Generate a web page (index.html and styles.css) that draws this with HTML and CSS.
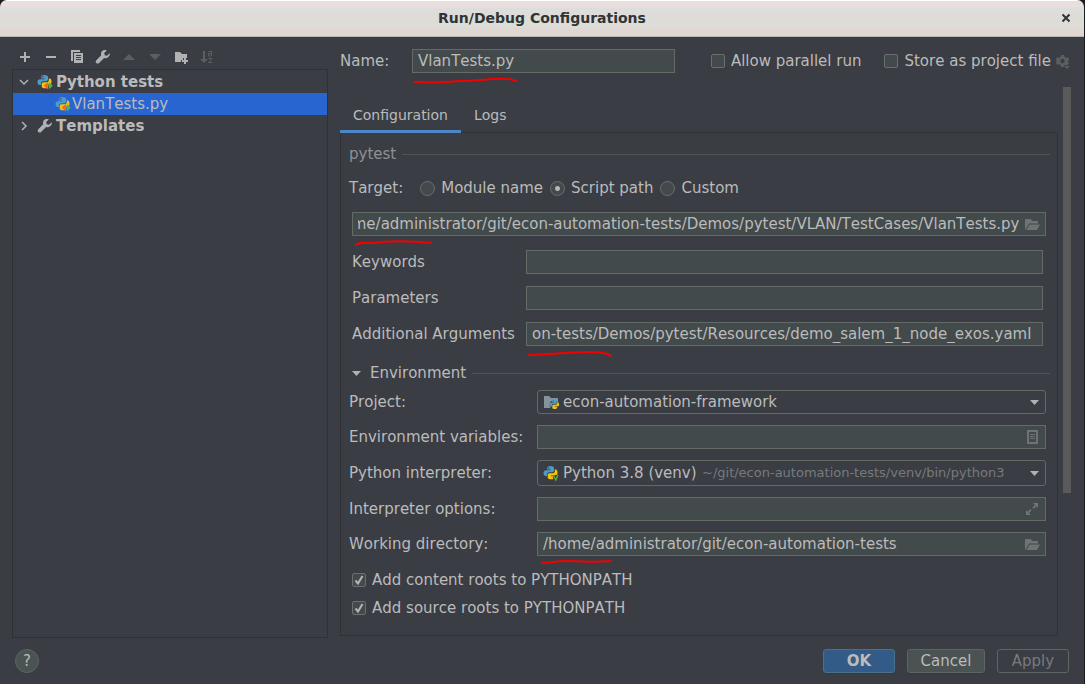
FILE: index.html
```html
<!DOCTYPE html>
<html lang="en">
<head>
<meta charset="utf-8">
<title>Run/Debug Configurations</title>
<link rel="stylesheet" href="styles.css">
</head>
<body>
<svg class="defs" width="0" height="0" aria-hidden="true">
  <defs>
    <g id="python">
      <path fill="#4a9cc9" d="M7 1C4.700 1 4.200 2 4.200 3v1.500h3.300v.7H3C1.500 5.200.5 6.200.5 8s1 3 2.200 3H4V9.300C4 8 5 7.200 6.200 7.200h3c1 0 1.800-.8 1.800-1.900V3c0-1.300-1.200-2-4-2z"/>
      <path fill="#f5c20b" d="M11.800 4.500v1.700c0 1.200-1 2-2.200 2H6.400c-1.100 0-1.700.9-1.700 1.800v2.500c0 1.200 1.300 1.800 3.300 1.800 2.200 0 3.300-.8 3.300-1.900v-1.200H8v-.7h4.500c1.300 0 2-1 2-2.800 0-2-.7-3.200-1.900-3.200z"/>
      <circle cx="5.800" cy="2.800" r=".7" fill="#3a3d44"/>
    </g>
    <g id="pytest">
      <use href="#python"/>
      <path fill="#f26522" d="M10.800 8v7.500L6.800 11.800z"/>
      <path fill="#4fb84d" d="M11.800 8v7.500l4-3.700z"/>
    </g>
    <path id="wrench" d="M14.700 4.200l-2.700 2.600-2.300-.5-.5-2.300 2.600-2.600C10 .6 8 1 6.900 2.300c-1 1.100-1.200 2.600-.7 3.900L1.300 11.200c-.8.8-.8 2 0 2.800.8.800 2 .8 2.800 0l5-5c1.300.5 2.800.2 3.900-.7 1.300-1.100 2.300-2.600 1.700-4.100z"/>
    <path id="open-folder" d="M0 12V1h5.500l2 2H13v2.500H4L1 11zM4.600 6.500H15L12 12H1.500z"/>
    <path id="down" d="M0 0h9L4.500 5z"/>
  </defs>
</svg>
<div class="dialog">
  <header class="titlebar">
    <h1>Run/Debug Configurations</h1>
    <button class="close" aria-label="Close"><svg width="10" height="10" viewBox="0 0 10 10"><path d="M1.500 1.500l7 7M8.500 1.500l-7 7"/></svg></button>
  </header>
  <main class="content">
    <aside class="sidebar">
      <div class="toolbar">
        <button aria-label="Add"><svg width="16" height="16" viewBox="0 0 16 16"><path d="M7 3h2v4h4v2H9v4H7V9H3V7h4z"/></svg></button>
        <button aria-label="Remove"><svg width="16" height="16" viewBox="0 0 16 16"><path d="M3 7h10v2H3z"/></svg></button>
        <button aria-label="Copy"><svg width="16" height="16" viewBox="0 0 16 16"><path d="M2 1h9v2H4v9H2z"/><path fill-rule="evenodd" d="M5 4h9v10H5zM7 6v1h5V6zm0 2v1h5V8zm0 2v1h5v-1z"/></svg></button>
        <button aria-label="Edit templates"><svg width="16" height="16" viewBox="0 0 16 16"><use href="#wrench"/></svg></button>
        <button aria-label="Move up" disabled><svg width="16" height="16" viewBox="0 0 16 16"><path d="M2 11h12L8 5z"/></svg></button>
        <button aria-label="Move down" disabled><svg width="16" height="16" viewBox="0 0 16 16"><path d="M2 5h12l-6 6z"/></svg></button>
        <button aria-label="Create folder"><svg width="16" height="16" viewBox="0 0 16 16"><path d="M2 3h5l2 2h5v4h-4v2H8v2H2z"/><path d="M11 9h2v2h2v2h-2v2h-2v-2H9v-2h2z"/></svg></button>
        <button aria-label="Sort" disabled><svg width="16" height="16" viewBox="0 0 16 16"><path d="M4 2h2v8h3l-4 4-4-4h3z"/><path class="line" d="M9.500 2.500h3V7h-3V4.500h3M9.500 9.500h3.500l-3.500 4H13.500"/></svg></button>
      </div>
      <ul class="tree">
        <li><svg class="chevron" width="16" height="16" viewBox="0 0 16 16"><path d="M4 6l4 4 4-4"/></svg><svg width="16" height="16" viewBox="0 0 16 16"><use href="#pytest"/></svg><b>Python tests</b></li>
        <li class="child selected"><svg width="16" height="16" viewBox="0 0 16 16"><use href="#pytest"/></svg><span>VlanTests.py</span></li>
        <li><svg class="chevron" width="16" height="16" viewBox="0 0 16 16"><path d="M6 4l4 4-4 4"/></svg><svg width="16" height="16" viewBox="0 0 16 16"><use href="#wrench"/></svg><b>Templates</b></li>
      </ul>
    </aside>
    <section class="editor">
      <div class="name-row">
        <label for="name">Name:</label>
        <div class="field"><input id="name" type="text" value="VlanTests.py">
          <svg class="mark" width="110" height="10" viewBox="0 0 110 10"><path d="M2 8q26 1 44-1c20 0 34-3 47-2 6 0 6 1 10 2"/></svg></div>
        <div class="options">
          <label class="check"><input type="checkbox">Allow parallel run</label>
          <div class="store"><label class="check"><input type="checkbox">Store as project file</label>
          <button class="gear" aria-label="Storage options" disabled><svg width="16" height="16" viewBox="0 0 16 16"><path fill-rule="evenodd" d="M6 2h3l.5 2 1.500.8 2-.6 1.300 2.500L12.800 8v1l1.200 1-1 2H9.500L9 14H6l-.5-2-1.500-.8-2 .6L.700 9.300 2.200 8 .7 6.700 2 4.200l2 .6L5.500 4zM7.500 5.800a2.200 2.200 0 100 4.400 2.200 2.200 0 000-4.400z"/><path d="M9 13h6l-3 3z"/></svg></button></div>
        </div>
      </div>
      <div class="scroll">
        <div class="pane">
          <nav class="tabs"><button class="active">Configuration</button><button>Logs</button></nav>
          <form class="panel">
            <h2 class="heading muted">pytest</h2>
            <div class="target"><span>Target:</span>
              <label class="check"><input type="radio" name="target">Module name</label>
              <label class="check"><input type="radio" name="target" checked>Script path</label>
              <label class="check"><input type="radio" name="target">Custom</label>
            </div>
            <div class="group">
              <div class="field path"><input class="tail" type="text" aria-label="Script path" value="/home/administrator/git/econ-automation-tests/Demos/pytest/VLAN/TestCases/VlanTests.py"><svg width="15" height="13" viewBox="0 0 15 13"><use href="#open-folder"/></svg>
                <svg class="mark" width="84" height="10" viewBox="0 0 84 10"><path d="M3 8c3-3 6-2 16-2 15-2 32-3 59 0"/></svg></div>
              <div class="args">
                <label for="keywords">Keywords</label><div class="field"><input id="keywords" type="text"></div>
                <label for="parameters">Parameters</label><div class="field"><input id="parameters" type="text"></div>
                <label for="additional">Additional Arguments</label><div class="field"><input class="tail" id="additional" type="text" value="on-tests/Demos/pytest/Resources/demo_salem_1_node_exos.yaml">
                  <svg class="mark" width="90" height="10" viewBox="0 0 90 10"><path d="M2 8c22 0 35-3 60-3 13 0 18 1 22 4"/></svg></div>
              </div>
            </div>
            <h2 class="heading environment"><svg width="9" height="5" viewBox="0 0 9 5"><use href="#down"/></svg>Environment</h2>
            <div class="env">
              <label for="project">Project:</label>
              <div class="combo"><svg width="16" height="16" viewBox="0 0 16 16"><path fill="#87939a" d="M1 2h5l2 2h7v10H1z"/><circle cx="11" cy="11" r="4.500" fill="#3a3d44"/><use href="#python" transform="translate(6 5) scale(.7)"/></svg><select id="project"><option>econ-automation-framework</option></select><svg class="arrow" width="9" height="5" viewBox="0 0 9 5"><use href="#down"/></svg></div>
              <label for="variables">Environment variables:</label>
              <div class="field"><input id="variables" type="text"><svg width="15" height="15" viewBox="0 0 15 15"><path fill-rule="evenodd" d="M2 0h11v14H2zM4 2v10h7V2z"/><path d="M5 4h5v1H5zm0 2h5v1H5zm0 2h5v1H5z"/></svg></div>
              <label for="interpreter">Python interpreter:</label>
              <div class="combo tall"><svg width="16" height="16" viewBox="0 0 16 16"><use href="#python"/><path fill="#3a3d44" d="M10 10h6v6h-6z"/><path fill="none" stroke="#59a93f" stroke-width="1.500" d="M10.500 10l2.200 5L15 10"/></svg><select id="interpreter"><option>Python 3.8 (venv)</option></select><span class="hint">~/git/econ-automation-tests/venv/bin/python3</span><svg class="arrow" width="9" height="5" viewBox="0 0 9 5"><use href="#down"/></svg></div>
              <label for="interpreter-options">Interpreter options:</label>
              <div class="field"><input id="interpreter-options" type="text"><svg width="15" height="15" viewBox="0 0 15 15"><path d="M8 1h5v5l-1.700-1.700-2.600 2.600-1.300-1.300L10 3zM1 8l1.700 1.700 2.600-2.600 1.300 1.300L4 11l2 2H1z"/></svg></div>
              <label for="directory">Working directory:</label>
              <div class="field"><input id="directory" type="text" value="/home/administrator/git/econ-automation-tests"><svg width="15" height="13" viewBox="0 0 15 13"><use href="#open-folder"/></svg>
                <svg class="mark" width="80" height="10" viewBox="0 0 80 10"><path d="M4 6c8 0 12-2 26-2s26 2 43 0"/></svg></div>
            </div>
            <div class="roots">
              <label class="check"><input type="checkbox" checked><svg class="tick" width="14" height="14" viewBox="0 0 14 14"><path d="M3.500 7.500l2.500 3 4.500-7.500"/></svg>Add content roots to PYTHONPATH</label>
              <label class="check"><input type="checkbox" checked><svg class="tick" width="14" height="14" viewBox="0 0 14 14"><path d="M3.500 7.500l2.500 3 4.500-7.500"/></svg>Add source roots to PYTHONPATH</label>
            </div>
          </form>
        </div>
        <div class="scrollbar"><div class="thumb"></div></div>
      </div>
    </section>
  </main>
  <footer class="footer">
    <button class="help" aria-label="Help">?</button>
    <button class="button primary">OK</button>
    <button class="button cancel">Cancel</button>
    <button class="button" disabled>Apply</button>
  </footer>
</div>
<script src="script.js"></script>
</body>
</html>
```
FILE: styles.css
```css
* { box-sizing: border-box; }
body { margin: 0; background: #1c1d20; color: #bbb; font: 15px/20px "DejaVu Sans", sans-serif; font-kerning: none; }
button, input, select { margin: 0; padding: 0; border: 0; background: none; color: inherit; font: inherit; font-kerning: none; }
svg { flex: none; fill: #afb1b3; }
.defs { position: absolute; }
.dialog { display: flex; flex-direction: column; min-height: 100vh; margin-right: 1px; border-radius: 7px 7px 0 0; background: #3a3d44; overflow: hidden; }
.titlebar { position: relative; display: flex; align-items: center; justify-content: center; height: 37px; border-bottom: 1px solid #bbb7b0; background: linear-gradient(#fff 0 1px, #e9dfdd 1px 7px, #dddddd 8px 12px, #dedcd6 14px 28px, #e0d6d3 29px); }
.titlebar h1 { margin: 0; color: #2e3436; font-size: 14px; line-height: 20px; }
.close { position: absolute; right: 13px; top: 8px; }
.close svg { fill: none; stroke: #2e3436; stroke-width: 2; }

.content { display: grid; grid-template-columns: 316px minmax(0, 1fr); gap: 12px; flex: 1; padding: 12px 13px 0 12px; }
.sidebar { display: flex; flex-direction: column; }
.toolbar { display: flex; gap: 10px; height: 20px; padding: 0 5px 4px; }
.toolbar svg { display: block; }
:disabled svg { fill: #5c5e60; }
.toolbar .line { fill: none; stroke: #5c5e60; }
.tree { flex: 1; margin: 0; padding: 1px 0 0; border: 1px solid #303133; list-style: none; }
.tree li { display: flex; align-items: center; height: 22px; padding-left: 3px; }
.tree li.child { padding-left: 42px; }
.tree li.child span { margin-left: 1px; }
.tree b { margin-left: 3px; }
.tree .chevron { margin-right: 5px; fill: none; stroke: #afb1b3; stroke-width: 1.5; }
.tree .selected { background: #2965d1; }

.editor { display: flex; flex-direction: column; }
.name-row { display: flex; align-items: center; height: 24px; }
.name-row > label { width: 72px; }
.name-row .field { flex: 1; }
.options { display: flex; gap: 23px; margin-left: 36px; }
.store { display: flex; align-items: center; gap: 4px; }
.gear svg { display: block; }
.field { position: relative; display: flex; align-items: center; height: 24px; padding: 0 5px; border: 1px solid #646a66; background: #434a4b; }
.field input { flex: 1; min-width: 0; height: 22px; outline: 0; }
.field > svg { margin-left: 6px; fill: #6e7375; }
.field .mark { position: absolute; left: 0; top: 24px; margin: 0; fill: none; stroke: #f50000; stroke-width: 2; stroke-linecap: round; }
.check { position: relative; display: flex; align-items: center; gap: 6px; white-space: nowrap; }
.check input { appearance: none; flex: none; width: 14px; height: 14px; border: 1px solid #6b6f6e; border-radius: 2px; background: #434a4b; }
.check input[type="radio"] { width: 15px; height: 15px; border-radius: 50%; }
.check input[type="radio"]:checked { background: radial-gradient(circle, #b4b6b6 0 2px, #434a4b 3px); }
.tick { position: absolute; left: 0; top: 3px; fill: none; stroke: #b4b6b6; stroke-width: 2; }

.scroll { display: flex; flex: 1; gap: 5px; margin: 13px 0 2px; }
.pane { display: flex; flex: 1; flex-direction: column; min-width: 0; }
.scrollbar { width: 8px; padding-top: 1px; }
.thumb { height: 74%; background: #5a5a5a; }
.tabs { position: relative; display: flex; }
.tabs button { padding: 14px 13px 0; border-bottom: 3px solid transparent; font-size: 14px; line-height: 30px; }
.tabs .active { border-color: #4a88c7; }
.panel { flex: 1; margin-top: -1px; padding: 11px 11px 16px 8px; border: 1px solid #303133; }
.heading { display: flex; align-items: center; gap: 6px; margin: 0 -4px 0 0; font-size: 15px; font-weight: 400; line-height: 20px; }
.heading::after { content: ""; flex: 1; height: 1px; background: #505456; }
.muted { color: #8f9192; }
.target { display: flex; gap: 7px; margin: 14px 0; }
.target span { margin-right: 10px; }
.group { padding-left: 3px; }
.args { display: grid; grid-template-columns: 174px minmax(0, 1fr); row-gap: 12px; align-items: center; margin-top: 14px; padding-right: 3px; }
.environment { margin-top: 17px; padding-left: 3px; }
.environment svg { margin-right: 3px; }
.env { display: grid; grid-template-columns: 188px minmax(0, 1fr); row-gap: 11px; align-items: center; margin-top: 7px; }
.combo { display: flex; align-items: center; height: 24px; padding: 0 6px 0 5px; border: 1px solid #646a66; border-radius: 3px; }
.combo.tall { height: 26px; }
.combo select { appearance: none; margin-left: 4px; outline: 0; }
.combo .arrow { margin-left: auto; }
.hint { margin-left: 5px; color: #777a7b; font-size: 13px; }
.roots { display: flex; flex-direction: column; align-items: start; gap: 8px; margin-top: 14px; padding-left: 3px; }

.footer { display: flex; align-items: center; gap: 12px; padding: 11px 15px; }
.help { width: 24px; height: 24px; margin-right: auto; border: 1px solid #5e6562; border-radius: 50%; background: #4a5252; line-height: 20px; }
.button { width: 72px; height: 24px; border: 1px solid #5e6562; border-radius: 3px; }
.button:disabled { color: #777a7b; }
.primary { border-color: #4a708a; background: #325b88; font-weight: 700; box-shadow: 0 1px #34373b; }
.cancel { width: 78px; background: #4a5252; box-shadow: 0 1px #34373b; }
```
FILE: script.js
```js
// Long values show their end, as after typing.
document.querySelectorAll('.tail').forEach(function (input) {
  input.scrollLeft = input.scrollWidth;
});
```
